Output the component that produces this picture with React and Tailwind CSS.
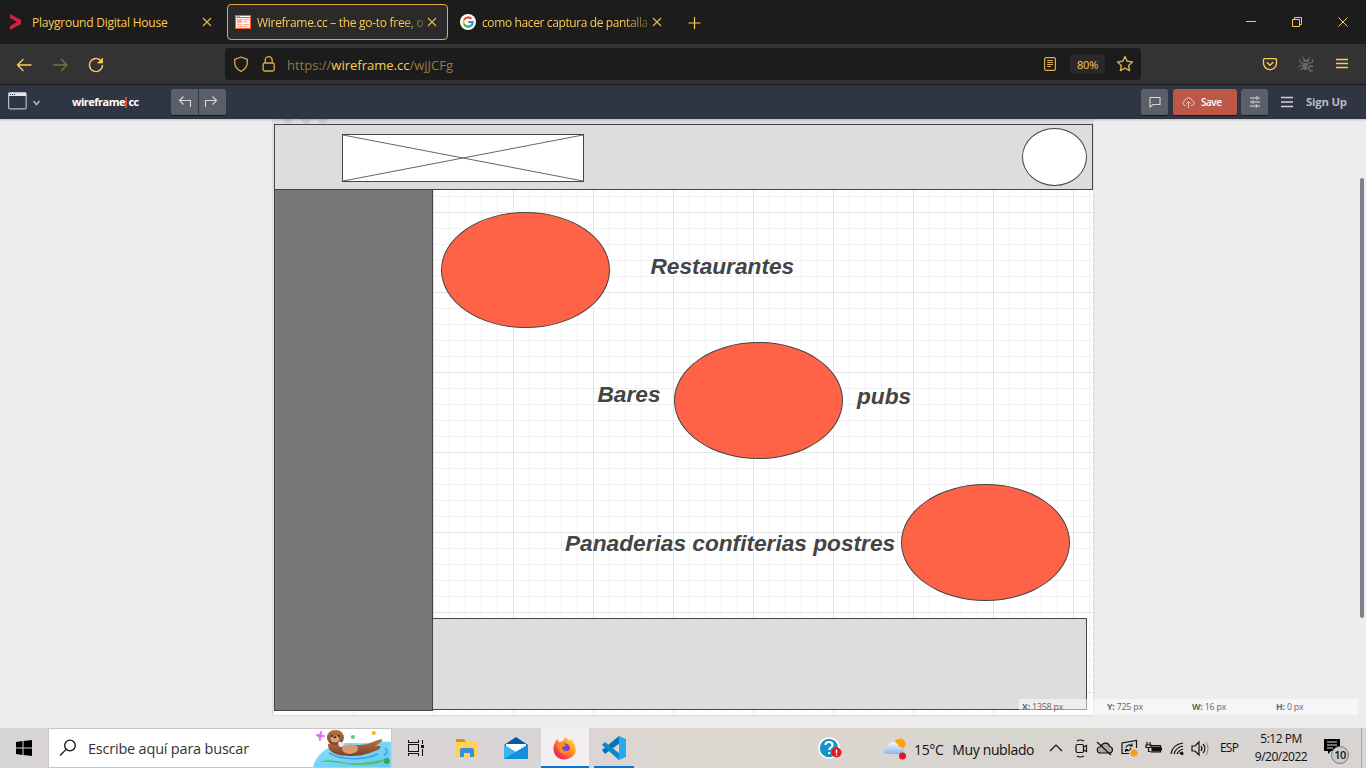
import React from 'react';

const Close = ({ className = '' }) => (
  <svg className={className} width="10" height="10" viewBox="0 0 10 10" fill="none" stroke="#e9bb4d" strokeWidth="1.1"><path d="M1 1l8 8M9 1L1 9" /></svg>
);

function TabBar() {
  return (
    <header className="flex h-[44px] items-center bg-[#1c1c1c] text-[12px] text-[#fbcb57]">
      <div className="flex h-full w-[227px] items-center pl-[9px]">
        <svg width="13" height="16" viewBox="0 0 13 16"><path d="M1 0l11 6v4L1 16v-4l7-4-7-4z" fill="#d5203f" /></svg>
        <span className="mt-[2px] ml-[10px] w-[170px] tracking-[-0.23px] whitespace-nowrap">Playground Digital House</span>
        <Close />
      </div>
      <div className="flex h-[36px] w-[221px] items-center rounded-[4px] border border-[#e3ae3d] bg-[#2a2a2a] pl-[7px]">
        <svg width="16" height="14" viewBox="0 0 16 14">
          <path fill="#fa5a28" d="M0 0h16v14H0z" /><path fill="#fff" d="M1 1h1v1H1zM3 1h1v1H3zM5 1h10v1H5z" /><path fill="#ffefe8" d="M1 3h14v10H1z" />
          <path fill="#ffab8c" d="M2 4h5v4H2zM8 4h6v1H8zM8 6h4v1H8zM2 9h5v1H2zM8 9h6v1H8zM2 11h10v1H2z" />
        </svg>
        <span className="mt-[2px] ml-[6px] w-[168px] tracking-[-0.29px] whitespace-nowrap [mask-image:linear-gradient(to_right,black_145px,transparent_175px)]">Wireframe.cc – the go-to free, o</span>
        <Close className="ml-[2px]" />
      </div>
      <div className="ml-[12px] flex h-full w-[202px] items-center">
        <svg width="16" height="16" viewBox="0 0 16 16">
          <circle cx="8" cy="8" r="8" fill="white" />
          <g fill="none" strokeWidth="2.1"><path d="M4 5.8A4.7 4.7 0 0 1 11.4 4.7" stroke="#ea4335" /><path d="M4 5.8A4.8 4.8 0 0 0 4 10.3" stroke="#fbbc05" /><path d="M4 10.3A4.7 4.7 0 0 0 11 11.6" stroke="#34a853" /><path d="M8.2 8h4.5Q12.7 10.3 11 11.6" stroke="#4285f4" /></g>
        </svg>
        <span className="mt-[2px] ml-[6px] w-[167px] tracking-[-0.38px] whitespace-nowrap [mask-image:linear-gradient(to_right,black_143px,transparent_175px)]">como hacer captura de pantalla</span>
        <Close className="ml-[3px]" />
      </div>
      <svg className="ml-[26px]" width="13" height="13" viewBox="0 0 13 13" stroke="#fbcb57" strokeWidth="1.2"><path d="M6.500 1v12M.5 7h12" /></svg>
      <svg className="mr-[16px] ml-auto" width="104" height="12" viewBox="0 0 104 12" fill="none" stroke="#fbcb57">
        <path d="M0 5.5h10M46.500 3.500h7v7h-7zM48.500 3.500v-2h7v7h-2M92.500 1.500l9 9M101.500 1.500l-9 9" />
      </svg>
    </header>
  );
}

function Toolbar() {
  return (
    <div className="flex h-[41px] items-center border-b border-[#181818] bg-[#333333] text-[#fbcb57]">
      <svg className="mt-px ml-[16px]" width="88" height="16" viewBox="0 0 88 16" fill="none" stroke="#fbcb57" strokeWidth="1.4" strokeLinecap="round" strokeLinejoin="round">
        <path d="M15 8H1.500M7 2.500L1.500 8 7 13.500" /><path opacity=".4" d="M37.500 8H51M45.500 2.500L51 8l-5.500 5.500" />
        <path d="M86 5.500A6.500 6.500 0 1 0 86.500 8.500" /><path d="M86.500 1.500v4.500H82z" fill="#fbcb57" strokeWidth=".8" />
      </svg>
      <div className="ml-[121px] flex h-[32px] w-[916px] items-center rounded-[4px] bg-[#1c1c1c]">
        <svg className="ml-[8px]" width="16" height="16" viewBox="0 0 16 16" fill="none" stroke="#d9ad48" strokeWidth="1.3"><path d="M8 1L14.300 3.400v3.200C14.300 10.500 11.500 13.800 8 15.300 4.500 13.800 1.700 10.500 1.700 6.600V3.400z" strokeLinejoin="round" /></svg>
        <svg className="ml-[13px]" width="14" height="16" viewBox="0 0 14 16" fill="none" stroke="#d9ad48" strokeWidth="1.3"><rect x="1.200" y="7" width="11" height="8" rx="1.500" /><path d="M3.200 7V4.200a3.500 3.500 0 0 1 7 0V7" /></svg>
        <span className="mt-[2px] ml-[11px] text-[13px] leading-4 text-[#947a3c]">https://<span className="text-[#fbcb57]">wireframe.cc</span>/wjJCFg</span>
        <svg className="ml-auto" width="12" height="14" viewBox="0 0 12 14" fill="none" stroke="#d9ad48" strokeWidth="1.2"><rect x=".6" y=".6" width="10.800" height="12.800" rx="1.500" /><path d="M3 3.500h6M3 5.500h6M3 7.500h6M3 9.500h4" /></svg>
        <span className="ml-[14px] flex h-[20px] w-[35px] items-center justify-center rounded-[3px] bg-[#292929] pt-[2px] text-[11px] tracking-[-0.2px]">80%</span>
        <svg className="mr-[7px] ml-[11px]" width="18" height="18" viewBox="0 0 18 18" fill="none" stroke="#d9ad48" strokeWidth="1.4" strokeLinejoin="round"><path d="M9 1.500l2.200 4.800 5.300.6-3.900 3.600 1 5.200L9 13.100l-4.600 2.600 1-5.200L1.500 6.900l5.300-.6z" /></svg>
      </div>
      <svg className="mr-[17px] ml-auto" width="87" height="18" viewBox="0 0 87 18" fill="none">
        <path d="M2.500 3.700h11a1 1 0 0 1 1 1v3.500a6.500 6.500 0 0 1-13 0V4.700a1 1 0 0 1 1-1z" stroke="#fbcb57" strokeWidth="1.300" /><path d="M4.800 7.200L8 10.300l3.200-3.100" stroke="#fbcb57" strokeWidth="1.500" />
        <path d="M41.500 4.500h5.500v2.500h-5.500zM41 8h6.500l-2 2.500-1 4.500H42l-1.500-3z" fill="#6c6560" />
        <g stroke="#6c6560" strokeWidth="1.200"><path d="M41.500 8.500L38 7V4M47 8.500L50.500 7V4M41 10.500h-3l-1.500 2M42.500 5l-2-3M46 5l2-3M41 12.500l-2.500 3" /><path d="M50.800 11.800a2.400 2.400 0 1 0 0 3.400" strokeWidth="1.800" /></g>
        <path d="M74 4.500h12M74 8.500h12M74 12.500h12" stroke="#fbcb57" strokeWidth="1.300" />
      </svg>
    </div>
  );
}

function AppBar() {
  return (
    <div className="relative z-10 flex h-[34px] items-center bg-[#2f3542] shadow-[0_1px_2px_rgba(0,0,0,.2)]">
      <svg className="-mt-[2px] ml-[8px]" width="34" height="18" viewBox="0 0 34 18" fill="none"><rect x=".6" y=".6" width="17.600" height="16.300" rx="1.500" stroke="#b6bac1" strokeWidth="1.200" /><path d="M1 1h17v3H1z" fill="#e4e5e8" /><path d="M2 2.500h1M4 2.500h1M6 2.500h1" stroke="#2f3542" /><path d="M25.500 9l3 3.500 3-3.500" stroke="#b6bac1" strokeWidth="1.500" /></svg>
      <div className="ml-[30px] flex w-[99px] items-center text-[11px] font-bold tracking-[-0.5px] text-white"><span>wireframe</span><i className="mr-px ml-[0.5px] h-[11px] w-[2px] bg-[#d9483b]" /><span>cc</span></div>
      <div className="flex h-[27px] gap-px">
        <span className="flex w-[27px] items-center justify-center rounded-l-[3px] border-b border-[#14171c] bg-[#5b5f68]"><svg width="14" height="14" viewBox="0 0 14 14" fill="none" stroke="#d4d6da" strokeWidth="1.100"><path d="M12.500 12V5.500H1.500M5.500 1.500l-4 4 4 4" /></svg></span>
        <span className="flex w-[27px] items-center justify-center rounded-r-[3px] border-b border-[#14171c] bg-[#5b5f68]"><svg className="-ml-[3px]" width="14" height="14" viewBox="0 0 14 14" fill="none" stroke="#d4d6da" strokeWidth="1.100"><path d="M1.500 12V5.500h11M8.500 1.500l4 4-4 4" /></svg></span>
      </div>
      <div className="mr-[19px] ml-auto flex h-[27px] items-center">
        <span className="flex h-full w-[27px] items-center justify-center rounded-[3px] border-b border-[#14171c] bg-[#5b5f68]"><svg width="12" height="12" viewBox="0 0 12 12" fill="none" stroke="#d4d6da" strokeWidth="1.100"><path d="M1 1.500h10v7H4L1 11z" /></svg></span>
        <span className="ml-[5px] flex h-full w-[64px] items-center rounded-[3px] border-b border-[#14171c] bg-[#bd5848] pl-[9px] text-[10px] font-semibold tracking-[-0.5px] text-white">
          <svg width="13" height="12" viewBox="0 0 13 12" fill="none" stroke="#f0c6bf"><path d="M4 9.500H3A2.500 2.500 0 0 1 3 4.600 3.700 3.700 0 0 1 10.200 4.600 2.500 2.500 0 0 1 10.200 9.500H9M6.500 12V5.500M4.300 7.700L6.500 5.500l2.200 2.200" /></svg>
          <span className="mt-[2px] ml-[6px]">Save</span>
        </span>
        <span className="ml-[4px] flex h-full w-[27px] items-center justify-center rounded-[3px] border-b border-[#14171c] bg-[#5b5f68]"><svg width="12" height="12" viewBox="0 0 12 12" fill="none" stroke="#e0e1e4" strokeWidth="1.200"><path d="M1 2h6M9 2h2M1 6h2M5 6h6M1 10h5M8 10h3M8 .3v3.500M4 4.200v3.500M7.200 8.200v3.500" /></svg></span>
        <svg className="ml-[13px]" width="12" height="12" viewBox="0 0 12 12" stroke="#d0d2d6" strokeWidth="1.500"><path d="M0 1.500h12M0 6h12M0 10.500h12" /></svg>
        <span className="ml-[13px] w-[41px] whitespace-nowrap text-[11.400px] font-bold tracking-[-0.25px] text-[#b9bcc2]">Sign Up</span>
      </div>
    </div>
  );
}

const oval = 'absolute rounded-[50%] border border-[#444] bg-[#ff6347]';
const label = "absolute whitespace-nowrap font-['Liberation_Sans',Arial,sans-serif] text-[22.68px] leading-[26px] font-bold italic text-[#444]";

function Canvas() {
  return (
    <main className="relative h-[609px] overflow-hidden bg-[#ededed]">
      <div className="relative ml-[273px] h-[596px] w-[820px] bg-white bg-[linear-gradient(to_right,#e4e4e4_1px,transparent_1px),linear-gradient(to_bottom,#e4e4e4_1px,transparent_1px),linear-gradient(to_right,#f1f1f1_1px,transparent_1px),linear-gradient(to_bottom,#f1f1f1_1px,transparent_1px)] bg-[size:80px_80px,80px_80px,16px_16px,16px_16px] bg-[position:0_0,0_13px,0_0,0_13px] shadow-[0_0_2px_rgba(0,0,0,.2)]">
        <div className="absolute top-0 left-0 h-[6px] w-[820px] overflow-hidden bg-[#ddd]">
          <div className="-mt-[5px] ml-[10px] flex gap-[7.500px]"><i className="size-[10px] rounded-full bg-[#ccc]" /><i className="size-[10px] rounded-full bg-[#ccc]" /><i className="size-[10px] rounded-full bg-[#ccc]" /></div>
        </div>
        <div className="absolute top-[5px] left-px h-[66px] w-[819px] border border-[#444] bg-[#ddd]" />
        <div className="absolute top-[15px] left-[69px] h-[48px] w-[242px] border border-[#444] bg-white">
          <svg className="block" width="240" height="46" stroke="#666"><path d="M0 0L240 46M240 0L0 46" /></svg>
        </div>
        <div className="absolute top-[9px] left-[749px] h-[58px] w-[65px] rounded-[50%] border border-[#444] bg-white" />
        <div className="absolute top-[499px] left-[159px] h-[92px] w-[655px] border border-[#444] bg-[#ddd]" />
        <div className="absolute top-[70px] left-px h-[522px] w-[159px] border border-[#444] bg-[#777]" />
        <div className={oval + ' top-[93px] left-[168px] h-[116px] w-[169px]'} />
        <div className={oval + ' top-[223px] left-[401px] h-[117px] w-[169px]'} />
        <div className={oval + ' top-[365px] left-[628px] h-[117px] w-[169px]'} />
        <span className={label + ' top-[134px] left-[377.5px]'}>Restaurantes</span>
        <span className={label + ' top-[262px] left-[324.5px]'}>Bares</span>
        <span className={label + ' top-[264px] left-[584px]'}>pubs</span>
        <span className={label + ' top-[411px] left-[292px]'}>Panaderias confiterias postres</span>
      </div>
      <div className="absolute top-[580px] left-[1019px] flex h-[16px] w-[339px] items-center bg-white/50 pt-px pl-[3px] text-[8.800px] tracking-[-0.2px] text-[#666]">
        <span className="w-[85px]"><b>X:</b> 1358 px</span><span className="w-[85px]"><b>Y:</b> 725 px</span><span className="w-[84px]"><b>W:</b> 16 px</span><span><b>H:</b> 0 px</span>
      </div>
      <div className="absolute top-[59px] left-[1360px] h-[440px] w-[4px] rounded-full bg-[#7d818b]" />
    </main>
  );
}

function Otter() {
  return (
    <svg className="ml-[2px]" width="78" height="38" viewBox="0 1 78 38">
      <defs>
        <linearGradient id="water" x2="1" y2="1"><stop stopColor="#8be0fb" /><stop offset="1" stopColor="#62c9f5" /></linearGradient>
        <linearGradient id="fur" x2="0" y2="1"><stop stopColor="#b87548" /><stop offset="1" stopColor="#7d4024" /></linearGradient>
      </defs>
      <path d="M0 39C4 24 19 14 39 15s25-3 39-1v25z" fill="url(#water)" />
      <path d="M16 25c12 8 38 7 49 1" fill="none" stroke="#3f9fe0" strokeWidth="1.5" />
      <path d="M15 16c6-2 10 3 17 2 9-2 16 0 23-2l10-4c5-2 6 0 2 3l-5 3c6-1 8 1 3 4-8 3-15 6-26 6-13 0-24-2-24-12z" fill="url(#fur)" />
      <path d="M30 18c6-2 12-2 15 1 1 5-4 7-9 7-6-1-8-4-6-8z" fill="#d99772" />
      <rect x="14" y="2" width="17" height="15" rx="7.500" fill="url(#fur)" />
      <ellipse cx="22" cy="11" rx="4.500" ry="3.500" fill="#d5a07a" /><circle cx="19" cy="8" r="1" fill="#2c201c" /><circle cx="26" cy="8" r="1" fill="#2c201c" /><ellipse cx="22" cy="9.300" rx="1.500" ry="1" fill="#2c201c" />
      <path d="M25 15c2-3 3-1 4 0 4-1 1 5-2 4z" fill="#f5e4ef" />
      <path d="M6 34c10-4 18 0 30 1 13 1 20-1 37-4-5 6-21 6-32 6-14-2-23-4-35-3z" fill="#54c553" />
      <circle cx="74" cy="33" r="3" fill="#35a85c" /><path d="M72 20c4 3 2 6-1 7" stroke="#3a9edc" fill="none" strokeWidth="1.500" />
      <path d="M8 3l1 4 3 1-4 1-1 4-1-4-3-2 4-1z" fill="#e176f5" stroke="#e176f5" /><circle cx="40" cy="9" r="2" fill="#56cc80" /><circle cx="61" cy="5" r="2" fill="#ffad0a" />
    </svg>
  );
}

function Taskbar() {
  return (
    <footer className="flex h-[40px] items-center bg-[linear-gradient(90deg,#d8d6d4_0,#d8d4d7_400px,#d9d4d5_560px,#ddd6d1_650px,#dad6ce_830px,#d8d4d0_1000px,#d7d4d3_1366px)] text-[#111]">
      <svg className="ml-[16px]" width="16" height="16" viewBox="0 0 16 16"><path d="M0 2l6.500-.9V7.500H0zM7.500 1L16 0v7.500H7.500zM0 8.500h6.500V15L0 14zM7.500 8.500H16V16l-8.500-1z" /></svg>
      <div className="ml-[16px] flex h-full w-[344px] items-center border border-[#c9c6c6] bg-white">
        <svg className="ml-[10px]" width="18" height="18" viewBox="0 0 18 18" fill="none" stroke="#111" strokeWidth="1.300"><circle cx="11" cy="6.500" r="5.300" /><path d="M7.200 10.400L1 16.500" /></svg>
        <span className="mt-px ml-[11px] w-[224px] text-[14.500px] tracking-[-0.2px] whitespace-nowrap text-[#333]">Escribe aquí para buscar</span>
        <Otter />
      </div>
      <svg className="ml-[16px]" width="16" height="16" viewBox="0 0 16 16" fill="none" stroke="#111" strokeWidth="1.100"><path d="M.5 4.500h10v7H.5zM.5 0v2.500h10V0M.5 16v-2.500h10V16M14.500 0v4M14.500 9v7" /><path d="M13 5h3v3h-3z" fill="#111" stroke="none" /></svg>
      <svg className="ml-[32px]" width="21" height="20" viewBox="0 0 21 20"><path d="M0 1h8l2 2h11v16H0z" fill="#ffd05a" /><path d="M0 1h8l2 2-2 1H0z" fill="#d49207" /><path d="M4 19v-7q0-2 2-2h10q2 0 2 2v7h-4v-4H8v4z" fill="#398dda" /></svg>
      <svg className="ml-[27px]" width="24" height="24" viewBox="0 0 24 24"><path d="M0 9L12 1l12 8v14H0z" fill="#0858a8" /><path d="M2 8h20v8H2z" fill="#fff" /><path d="M0 8.500L12 16 24 8.500V23H0z" fill="#36b5ee" /><path d="M0 23L24 8.500V23z" fill="#1390dc" /></svg>
      <div className="ml-[13px] flex h-full w-[48px] items-center justify-center border-b-2 border-[#0877d4] bg-[#f1eff0] pt-[2px]">
        <svg width="24" height="24" viewBox="0 0 24 24"><defs><linearGradient id="fire" x1="1" y1="0" x2="0" y2="1"><stop stopColor="#fff14a" /><stop offset=".45" stopColor="#ff8b20" /><stop offset=".8" stopColor="#f52858" /><stop offset="1" stopColor="#e3258b" /></linearGradient></defs><path d="M3 5l1-2 2 3 4-1 2-4 5 4 1-2c5 5 6 12 3 16-4 5-13 6-17 2S-1 11 3 5z" fill="url(#fire)" /><circle cx="12" cy="12.500" r="5" fill="#7542d9" /><path d="M4 8c4-3 8 0 9 2l-4 1c0 5 6 5 8 2-1 8-12 7-13-5z" fill="#ff8a20" /></svg>
      </div>
      <div className="ml-[5px] flex h-full w-[40px] items-center justify-center border-b-2 border-[#0877d4] pt-[2px]">
        <svg width="24" height="24" viewBox="0 0 24 24"><path d="M17 0L0 14l3 4L18 7z" fill="#0873b8" /><path d="M0 9l3-3 15 12-1 6z" fill="#078acd" /><path d="M17 0l7 3v18l-7 3z" fill="#27a9f1" /></svg>
      </div>
      <svg className="mt-[2px] ml-[184px]" width="24" height="24" viewBox="0 0 24 24"><circle cx="11" cy="11" r="10.800" fill="#fff" /><circle cx="11" cy="11" r="9.200" fill="#1495c9" /><path d="M7.500 8c0-4 7-4 7 0 0 2.500-3.300 2.500-3.300 5M11.200 15v2" fill="none" stroke="white" strokeWidth="2.200" /><circle cx="18.500" cy="15.500" r="5" fill="#e4151c" /><path d="M18.500 12.500v4M18.500 17.500v1.300" stroke="white" strokeWidth="1.500" /></svg>
      <svg className="mt-[2px] ml-[41px]" width="24" height="24" viewBox="0 0 24 24"><defs><linearGradient id="cloud" x2="0" y2="1"><stop stopColor="#f4faff" /><stop offset="1" stopColor="#8fb4e4" /></linearGradient></defs><circle cx="17" cy="7" r="5.500" fill="#ff9f0d" /><path d="M5 17c-7 0-5-7 0-7 1-7 10-6 11 0 6-1 7 7 1 7z" fill="url(#cloud)" /><circle cx="19.500" cy="19" r="3.500" fill="#e31237" /></svg>
      <div className="mt-[2px] ml-[7px] flex w-[135px] gap-[9px] whitespace-nowrap text-[14px] tracking-[-0.37px]"><span>15°C</span><span>Muy nublado</span></div>
      <svg width="160" height="20" viewBox="0 0 160 20" fill="none" stroke="#111" strokeWidth="1.200">
        <path d="M1 13l6-6 6 6" />
        <rect x="27" y="6.500" width="7.500" height="8" rx="1.500" /><path d="M34.500 9l3-1.500v6l-3-1.500M28 3q3-2 7 0M28 18q3 2 7 0" />
        <path d="M52 15c-5 0-5-6 0-6.500 2-5 8-4 8.500 0 4 .5 4 6.500-.5 6.500z" fill="#aaa" /><path d="M48 4l14 13" />
        <path d="M87.500 10V2.500L73 5v10.500h7M77 9.500q2-4 5.500-2M83 5.500V8h-2.500M82 10q-2 4-5 2M76.500 14v-2.500H79" /><circle cx="85" cy="15" r="3.500" fill="#ff9a08" stroke="none" />
        <path d="M101 7.500h10.500v6.500h-10M112.500 9.500v3M98 4v3M101 4v3M97 7h5v2.500h-5zM99.500 9.500v4h2" /><path d="M103 9h7.500v4H103z" fill="#111" />
        <path d="M122 16C123 10 127 6 134 5M125 16c1-4 4-7 9-8M128 16c1-3 3-4 6-5M131 16c0-1 1-2 3-2" /><circle cx="133" cy="15.500" r="1" fill="#111" />
        <path d="M143 8h3l4-4v13l-4-4h-3zM152 8q2 2.500 0 5M154 6q4 4.500 0 9" /><path d="M157 4q4 6.500 0 13" stroke="#999" />
      </svg>
      <span className="ml-[11px] w-[24px] text-[12px] tracking-[-0.8px]">ESP</span>
      <div className="ml-[5px] flex w-[64px] flex-col items-center text-[12px] leading-[18px] tracking-[-0.5px] whitespace-nowrap"><span>5:12 PM</span><span>9/20/2022</span></div>
      <div className="relative mt-[8px] ml-[11px] h-[30px] w-[27px]">
        <svg width="17" height="18" viewBox="0 0 17 18"><path d="M0 2h16v12H7l-3 3v-3H0z" /><path d="M3 5h10M3 8h10M3 11h6" stroke="#ddd" /></svg>
        <span className="absolute top-[9px] left-[7px] flex size-[18px] items-center justify-center rounded-full border border-[#777] bg-[#cecbcb] text-[11px] font-semibold tracking-[-0.5px]">10</span>
      </div>
      <i className="mr-[4px] ml-auto h-full w-px bg-[#aaa7a7]" />
    </footer>
  );
}

export default function App() {
  return (
    <div className="h-[768px] w-[1366px] overflow-hidden font-['Open_Sans','Noto_Sans',sans-serif]">
      <TabBar />
      <Toolbar />
      <AppBar />
      <Canvas />
      <Taskbar />
    </div>
  );
}
